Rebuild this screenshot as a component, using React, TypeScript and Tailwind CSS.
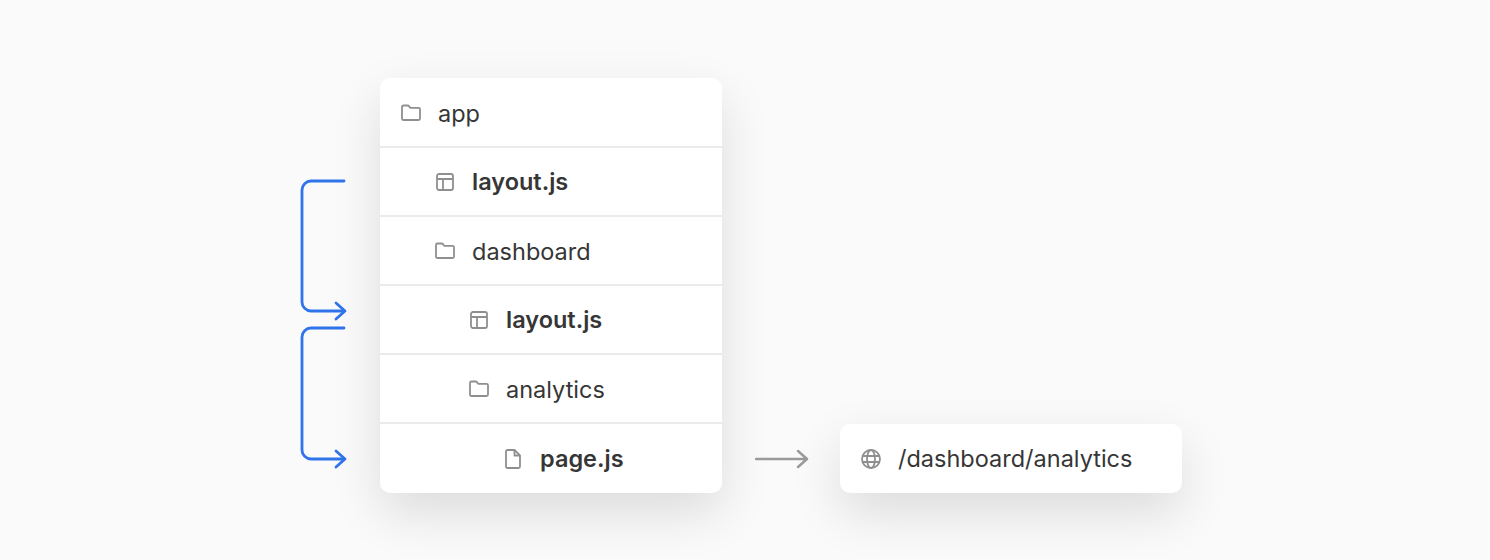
const BLUE = "#2f74ea";

function FolderIcon() {
  return (
    <svg width="22" height="22" viewBox="0 0 22 22" fill="none" stroke="#8f8f8f" strokeWidth="1.8" strokeLinejoin="round" className="shrink-0">
      <path d="M2 5a1.5 1.5 0 0 1 1.5-1.5h4.2c.5 0 .9.2 1.2.6l1.3 1.7h8.3A1.5 1.5 0 0 1 20 7.3v9.2a1.5 1.5 0 0 1-1.5 1.5h-15A1.5 1.5 0 0 1 2 16.500z" />
    </svg>
  );
}

function LayoutIcon() {
  return (
    <svg width="18" height="18" viewBox="0 0 18 18" fill="none" stroke="#8f8f8f" strokeWidth="1.8" className="shrink-0">
      <rect x="1" y="1" width="16" height="16" rx="2" />
      <path d="M1 6h16M7 6v11" />
    </svg>
  );
}

function PageIcon() {
  return (
    <svg width="16" height="20" viewBox="0 0 16 20" fill="none" stroke="#8f8f8f" strokeWidth="1.8" strokeLinejoin="round" className="shrink-0">
      <path d="M1 2.500A1.500 1.500 0 0 1 2.500 1H9.500L15 6.500V17.500A1.500 1.500 0 0 1 13.500 19H2.500A1.500 1.500 0 0 1 1 17.500z" />
      <path d="M9.500 1V6.500H15" />
    </svg>
  );
}

function GlobeIcon() {
  return (
    <svg width="20" height="20" viewBox="0 0 20 20" fill="none" stroke="#8f8f8f" strokeWidth="1.800" className="shrink-0">
      <circle cx="10" cy="10" r="9" />
      <ellipse cx="10" cy="10" rx="4" ry="9" />
      <path d="M1.500 7h17M1.500 13h17" />
    </svg>
  );
}

function Row({ icon, label, bold, className }: { icon: React.ReactNode; label: string; bold?: boolean; className: string }) {
  return (
    <div className={`flex items-center border-[#ebebeb] ${className}`}>
      {icon}
      <span className={bold ? "pt-px font-semibold" : "pt-[3px]"}>{label}</span>
    </div>
  );
}

export default function App() {
  return (
    <div
      className="flex h-[560px] w-[1490px] overflow-hidden bg-[#fafafa] pl-[299px] pt-[78px] text-[23.500px] text-[#363636]"
      style={{ fontFamily: "Inter, sans-serif" }}
    >
      <svg width="48" height="300" viewBox="0 0 48 300" fill="none" stroke={BLUE} strokeWidth="2.800" strokeLinecap="round" strokeLinejoin="round" className="mt-[95px] shrink-0">
        <path d="M45 8H12A9 9 0 0 0 3 17V129A9 9 0 0 0 12 138H45" />
        <path d="M37 130L46 138L37 146" />
        <path d="M45 155H12A9 9 0 0 0 3 164V277A9 9 0 0 0 12 286H45" />
        <path d="M37 278L46 286L37 294" />
      </svg>

      <div className="ml-[33px] h-[415px] w-[342px] shrink-0 rounded-[10px] bg-white shadow-[0_20px_50px_rgba(0,0,0,0.12)]">
        <Row icon={<span className="w-[38px] pt-[2px]"><FolderIcon /></span>} label="app" className="h-[68px] pl-5" />
        <Row icon={<span className="w-[36px] pt-px"><LayoutIcon /></span>} label="layout.js" bold className="h-[69px] border-t-2 pl-[56px]" />
        <Row icon={<span className="w-[38px] pt-px"><FolderIcon /></span>} label="dashboard" className="h-[69px] border-t-2 pl-[54px]" />
        <Row icon={<span className="w-[36px] pt-px"><LayoutIcon /></span>} label="layout.js" bold className="h-[69px] border-t-2 pl-[90px]" />
        <Row icon={<span className="w-[38px] pt-px"><FolderIcon /></span>} label="analytics" className="h-[69px] border-t-2 pl-[88px]" />
        <Row icon={<span className="w-[35px]"><PageIcon /></span>} label="page.js" bold className="h-[71px] border-t-2 pl-[125px]" />
      </div>

      <div className="flex h-[415px] items-end">
        <svg width="54" height="20" viewBox="0 0 54 20" fill="none" stroke="#9a9a9a" strokeWidth="2.400" strokeLinecap="round" strokeLinejoin="round" className="mb-[24px] ml-[33px] shrink-0">
          <path d="M1 10H51M43 2L52 10L43 18" />
        </svg>
        <div className="ml-[31px] flex h-[69px] w-[342px] items-center rounded-[10px] bg-white pl-[21px] shadow-[0_20px_50px_rgba(0,0,0,0.12)]">
          <div className="flex w-[37px] items-center"><GlobeIcon /></div>
          <span className="pt-px">/dashboard/analytics</span>
        </div>
      </div>
    </div>
  );
}
